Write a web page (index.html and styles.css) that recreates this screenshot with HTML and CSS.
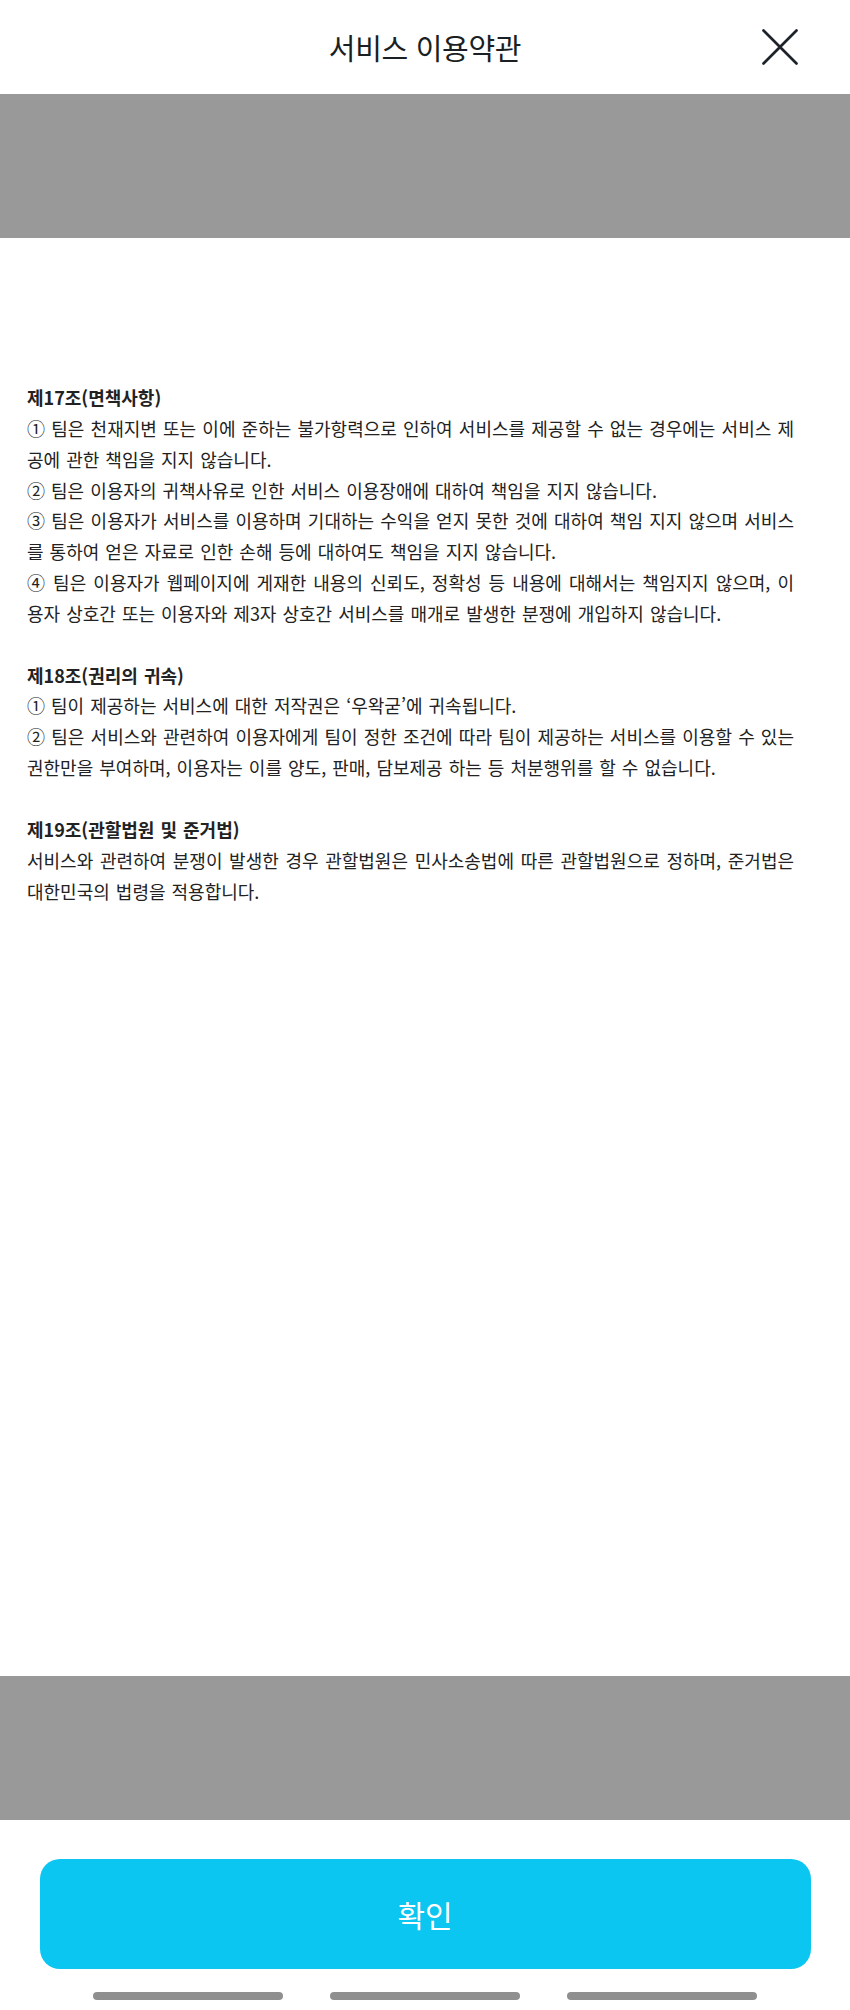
FILE: index.html
```html
<!DOCTYPE html>
<html lang="ko">
<head>
<meta charset="utf-8">
<title>서비스 이용약관</title>
<link rel="stylesheet" href="styles.css">
</head>
<body>
<div class="page">
  <header class="header">
    <h1 class="title">서비스 이용약관</h1>
    <button class="close" aria-label="닫기">
      <svg width="36" height="36" viewBox="0 0 36 36" fill="none" stroke="#1d2329" stroke-width="2.7" stroke-linecap="round">
        <path d="M1.5 1.5 L34.5 34.5 M34.5 1.5 L1.5 34.5"/>
      </svg>
    </button>
  </header>
  <div class="band"></div>
  <main class="content">
    <p class="head">제17조(면책사항)</p>
    <p>① 팀은 천재지변 또는 이에 준하는 불가항력으로 인하여 서비스를 제공할 수 없는 경우에는 서비스 제공에 관한 책임을 지지 않습니다.</p>
    <p>② 팀은 이용자의 귀책사유로 인한 서비스 이용장애에 대하여 책임을 지지 않습니다.</p>
    <p>③ 팀은 이용자가 서비스를 이용하며 기대하는 수익을 얻지 못한 것에 대하여 책임 지지 않으며 서비스를 통하여 얻은 자료로 인한 손해 등에 대하여도 책임을 지지 않습니다.</p>
    <p>④ 팀은 이용자가 웹페이지에 게재한 내용의 신뢰도, 정확성 등 내용에 대해서는 책임지지 않으며, 이용자 상호간 또는 이용자와 제3자 상호간 서비스를 매개로 발생한 분쟁에 개입하지 않습니다.</p>
    <p class="gap">&nbsp;</p>
    <p class="head">제18조(권리의 귀속)</p>
    <p>① 팀이 제공하는 서비스에 대한 저작권은 ‘우왁굳’에 귀속됩니다.</p>
    <p>② 팀은 서비스와 관련하여 이용자에게 팀이 정한 조건에 따라 팀이 제공하는 서비스를 이용할 수 있는 권한만을 부여하며, 이용자는 이를 양도, 판매, 담보제공 하는 등 처분행위를 할 수 없습니다.</p>
    <p class="gap">&nbsp;</p>
    <p class="head">제19조(관할법원 및 준거법)</p>
    <p>서비스와 관련하여 분쟁이 발생한 경우 관할법원은 민사소송법에 따른 관할법원으로 정하며, 준거법은 대한민국의 법령을 적용합니다.</p>
  </main>
  <div class="band"></div>
  <footer class="footer">
    <button class="confirm">확인</button>
    <div class="bars">
      <span class="bar"></span>
      <span class="bar"></span>
      <span class="bar"></span>
    </div>
  </footer>
</div>
</body>
</html>
```

FILE: styles.css
```css
* {
  box-sizing: border-box;
}

html, body {
  margin: 0;
  padding: 0;
  background: #ffffff;
}

body {
  font-family: "Noto Sans CJK KR", "Noto Sans", sans-serif;
}

.page {
  width: 850px;
  height: 2010px;
  display: flex;
  flex-direction: column;
}

.header {
  height: 94px;
  position: relative;
  display: flex;
  align-items: center;
  justify-content: center;
}

.title {
  margin: 0;
  font-size: 29px;
  font-weight: 400;
  color: #1a1f24;
  letter-spacing: -0.3px;
  line-height: 1;
}

.close {
  position: absolute;
  right: 52px;
  top: 29px;
  width: 36px;
  height: 36px;
  padding: 0;
  border: 0;
  background: transparent;
  display: block;
}

.close svg {
  display: block;
}

.band {
  height: 144px;
  background: #999999;
  flex: none;
}

.content {
  flex: 1;
  padding: 144px 0 0 27px;
  color: #222222;
  font-size: 18px;
  line-height: 30.85px;
  word-spacing: 1px;
}

.content p {
  width: 767px;
  margin: 0;
  text-align: justify;
}

.content .head {
  font-weight: 700;
}

.footer {
  height: 190px;
  flex: none;
  display: flex;
  flex-direction: column;
  align-items: center;
  padding-top: 39px;
}

.confirm {
  width: 771px;
  height: 110px;
  border: 0;
  border-radius: 20px;
  background: #0bc6f0;
  color: #ffffff;
  font-family: "Noto Sans CJK KR", "Noto Sans", sans-serif;
  font-size: 30px;
  font-weight: 400;
  padding: 0;
}

.bars {
  margin-top: 23px;
  display: flex;
  gap: 47px;
}

.bar {
  width: 190px;
  height: 8px;
  border-radius: 4px;
  background: #8f8f8f;
}
```
